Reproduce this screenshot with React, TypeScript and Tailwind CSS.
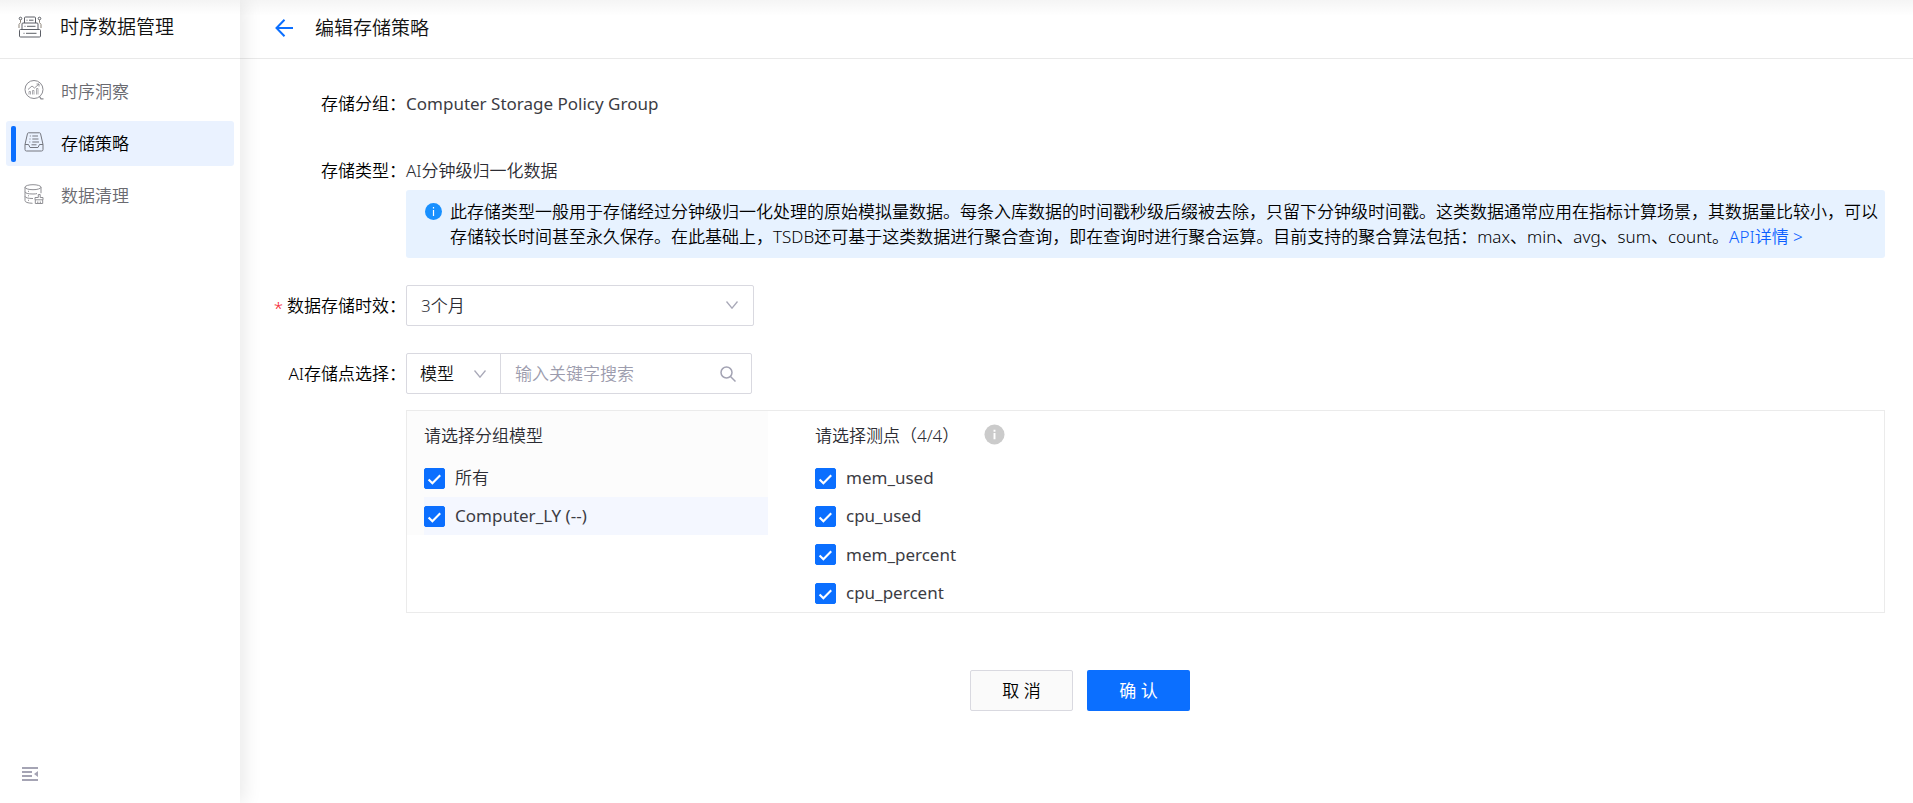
import { useState } from 'react';
import type { ReactNode } from 'react';

function BrandIcon() {
  return (
    <svg viewBox="0 0 24 22" className="h-[22px] w-6 shrink-0" fill="none" stroke="#5c5f66" strokeWidth="1">
      <path d="M6.500 7V2q0-1 1-1h9q1 0 1 1v5" />
      <path d="M4 13.500V8q0-1 1-1h14q1 0 1 1v5.500" />
      <path d="M2.500 13.500h19q1 0 1 1V20q0 1-1 1h-19q-1 0-1-1v-5.500q0-1 1-1z" />
      <path d="M8.500 4.200h1M11 4.200h4.500M6.500 10.300h1M9 10.300h8.500M5.500 17.300h1M8 17.300h10.500" />
      <circle cx="2.500" cy="2.500" r="1.300" />
      <circle cx="21.500" cy="2.500" r="1.300" />
      <path d="M2.500 4v2.500L1 8.500V12M21.500 4v2.500L23 8.500V12" stroke="#8b8378" />
    </svg>
  );
}

function InsightIcon() {
  return (
    <svg viewBox="0 0 20 20" className="size-5 shrink-0" fill="none" stroke="#8a8a90" strokeWidth="1">
      <circle cx="10" cy="9.500" r="9" />
      <path d="M15.500 16.500l1.500 2.300h2.500" strokeWidth="1.300" />
      <path d="M4 9.500l4-3.500 2.500 2L15 4M12.500 4H15v2.500" strokeWidth=".9" />
      <path d="M5 14.500v-3h1.500v3M8.500 14.500v-4H10v4M12.500 14.500v-6H14v6" strokeWidth=".7" />
    </svg>
  );
}

function PolicyIcon() {
  return (
    <svg viewBox="0 0 20 20" className="size-5 shrink-0" fill="none" stroke="#74777f" strokeWidth="1">
      <path d="M1 12.500L3.500 1.500q.2-.7 1-.7h11q.8 0 1 .7L19 12.500" />
      <path d="M1 12.500h3.500l1.500 3h8l1.500-3H19v5q0 1.500-1.500 1.500h-15Q1 19 1 17.500z" />
      <path d="M5.800 4h1M8.300 4H14M5.500 7h1M8.300 7h6.200M5.300 10h1M8.300 10H15M7.500 12.800h5" />
    </svg>
  );
}

function CleanIcon() {
  return (
    <svg viewBox="0 0 20 20" className="size-5 shrink-0" fill="none" stroke="#8f8f94" strokeWidth="1">
      <ellipse cx="9" cy="3.200" rx="8" ry="2.500" />
      <path d="M1 3.200v13.300q0 2.500 7.500 2.800M17 3.200v6" />
      <path d="M1 7.800q.5 2.200 8 2.200 2.500 0 4-.4M1 12.300q.5 2.200 8 2.200" />
      <path d="M4 7.300h1M4 11.800h1M4 16.300h1" />
      <path d="M14.300 13.500v-3h1.900v3h2.800v2.300h-8v-2.300zM11.300 15.800v3.700h7.400v-3.700M13.800 19.500v-2M16.300 19.500v-2" />
    </svg>
  );
}

function CollapseIcon() {
  return (
    <svg viewBox="0 0 16 14" className="h-[14px] w-4" fill="#a5a4b4">
      <path d="M0 0h16v2H0zM0 4h10v2H0zM0 8h10v2H0zM0 12h16v2H0zM16 4v6l-4-3z" />
    </svg>
  );
}

function ChevronDown({ className }: { className: string }) {
  return (
    <svg viewBox="0 0 12 8" className={`h-2 w-3 ${className}`} fill="none" stroke="#a9a9b8" strokeWidth="1.300">
      <path d="M.5.5L6 7.200 11.500.5" />
    </svg>
  );
}

function Checkbox({ label, className = '' }: { label: string; className?: string }) {
  const [checked, setChecked] = useState(true);
  return (
    <label className={`flex cursor-pointer items-center gap-[10px] ${className}`}>
      <span className="relative size-[21px] shrink-0">
        <input
          type="checkbox"
          checked={checked}
          onChange={(e) => setChecked(e.target.checked)}
          className="block size-[21px] appearance-none rounded-[2px] border border-[#d4d4dc] bg-white checked:border-[#0b6fff] checked:bg-[#0b6fff]"
        />
        <svg viewBox="0 0 22 22" className="pointer-events-none absolute inset-0 size-[21px]" fill="none" stroke="#fff" strokeWidth="2.200">
          <path d="M4.800 12l4 4L17 7.500" />
        </svg>
      </span>
      <span>{label}</span>
    </label>
  );
}

function NavItem({ icon, label, active = false }: { icon: ReactNode; label: string; active?: boolean }) {
  return (
    <a
      href="#"
      aria-current={active ? 'page' : undefined}
      className={`flex h-[45px] items-center rounded-[3px] pl-[5px] ${active ? 'bg-[#eaf2ff] text-black' : 'text-[#6a6a70]'}`}
    >
      <span className={`h-9 w-[5px] rounded-[2px] ${active ? 'bg-[#0b6fff]' : ''}`} />
      <span className="-mt-1 ml-2">{icon}</span>
      <span className="ml-[17px]">{label}</span>
    </a>
  );
}

function Field({ label, htmlFor, required = false, children, tall = false }: {
  label: string;
  htmlFor?: string;
  required?: boolean;
  children: ReactNode;
  tall?: boolean;
}) {
  const labelClass = `flex w-[131px] shrink-0 items-center justify-end whitespace-nowrap text-black ${tall ? 'h-[41px]' : 'h-[26px]'}`;
  const text = (
    <>
      {required && <span className="mr-1 pt-1 text-[#f5222d]">*</span>}
      {label}
    </>
  );
  return (
    <div className="flex">
      {htmlFor ? <label htmlFor={htmlFor} className={labelClass}>{text}</label> : <div className={labelClass}>{text}</div>}
      <div className="min-w-0 flex-1">{children}</div>
    </div>
  );
}

export default function App() {
  return (
    <div lang="zh-CN" className="relative flex min-h-screen bg-white font-['Noto_Sans','Noto_Sans_CJK_SC',sans-serif] text-[17px] leading-[26px] font-[350] text-[#2c2c33]">
      <div className="pointer-events-none absolute inset-x-0 top-0 h-4 bg-linear-to-b from-black/4 to-transparent" />

      <aside className="z-10 flex w-60 shrink-0 flex-col bg-white shadow-[4px_0_18px_rgba(0,0,0,0.09)]">
        <div className="flex h-[59px] items-center gap-[18px] border-b border-[#e9e9e9] bg-linear-to-b from-[#f4f4f4] to-white to-25% pb-1 pl-[18px] text-[19px] text-[#111]">
          <BrandIcon />
          <span>时序数据管理</span>
        </div>
        <nav className="flex flex-col gap-[7px] px-[6px] pt-[10px]">
          <NavItem icon={<InsightIcon />} label="时序洞察" />
          <NavItem icon={<PolicyIcon />} label="存储策略" active />
          <NavItem icon={<CleanIcon />} label="数据清理" />
        </nav>
        <button type="button" aria-label="收起菜单" className="mt-auto mb-[22px] ml-[22px] self-start">
          <CollapseIcon />
        </button>
      </aside>

      <main className="flex min-w-0 flex-1 flex-col">
        <header className="flex h-[59px] items-center gap-[22px] border-b border-[#e9e9e9] pb-[2px] pl-[35px]">
          <a href="#" aria-label="返回">
            <svg viewBox="0 0 18 18" className="size-[18px]" fill="none" stroke="#0b6fff" strokeWidth="2">
              <path d="M9.500.8L1.500 9l8 8.200M1.500 9H18" />
            </svg>
          </a>
          <h1 className="text-[19px] font-[350] text-[#111]">编辑存储策略</h1>
        </header>

        <form className="pt-8 pr-7 pl-[35px]" onSubmit={(e) => e.preventDefault()}>
          <div className="flex flex-col gap-[27px]">
            <div className="mb-[14px]">
              <Field label="存储分组："><span className="font-normal text-[#3c3c43]">Computer Storage Policy Group</span></Field>
            </div>

            <Field label="存储类型：">
              <div>AI分钟级归一化数据</div>
              <div className="mt-[6px] flex items-start gap-2 rounded-[3px] bg-[#e7f2ff] py-[9px] pr-1 pl-[19px] leading-[25px] text-black">
                <svg viewBox="0 0 17 17" className="mt-1 size-[17px] shrink-0">
                  <circle cx="8.500" cy="8.500" r="8.500" fill="#1890ff" />
                  <path d="M8.500 4v1.500M8.500 7v6" stroke="#fff" strokeWidth="1.200" />
                </svg>
                <p>
                  此存储类型一般用于存储经过分钟级归一化处理的原始模拟量数据。每条入库数据的时间戳秒级后缀被去除，只留下分钟级时间戳。这类数据通常应用在指标计算场景，其数据量比较小，可以存储较长时间甚至永久保存。在此基础上，TSDB还可基于这类数据进行聚合查询，即在查询时进行聚合运算。目前支持的聚合算法包括：max、min、avg、sum、count。
                  <a href="#" className="text-[#0b5fff]">API详情 &gt;</a>
                </p>
              </div>
            </Field>

            <Field label="数据存储时效：" htmlFor="retention" required tall>
              <div className="relative w-[348px]">
                <select id="retention" className="block h-[41px] w-full appearance-none rounded-[2px] border border-[#d9d9e0] bg-white px-[14px]">
                  <option>3个月</option>
                </select>
                <ChevronDown className="pointer-events-none absolute top-4 right-4" />
              </div>
            </Field>

            <Field label="AI存储点选择：" htmlFor="keyword" tall>
              <div className="flex h-[41px] w-[346px] rounded-[2px] border border-[#d9d9e0]">
                <div className="relative w-[94px] border-r border-[#d9d9e0]">
                  <select aria-label="搜索类型" className="h-full w-full appearance-none px-[13px] text-[#111]">
                    <option>模型</option>
                  </select>
                  <ChevronDown className="pointer-events-none absolute top-4 right-[14px]" />
                </div>
                <input
                  id="keyword"
                  type="text"
                  placeholder="输入关键字搜索"
                  className="min-w-0 flex-1 px-[14px] outline-none placeholder:text-[#9c9cad]"
                />
                <button type="button" aria-label="搜索" className="pr-[15px]">
                  <svg viewBox="0 0 16 16" className="size-4" fill="none" stroke="#a3a3b3" strokeWidth="1.500">
                    <circle cx="6.500" cy="6.500" r="5.500" />
                    <path d="M10.500 10.500l5 5" />
                  </svg>
                </button>
              </div>

              <div className="mt-4 flex border border-[#ebebeb]">
                <section className="w-[361px] shrink-0 self-start bg-[#fcfcfc] pl-[17px]">
                  <h2 className="pt-3 pb-[10px] font-[350]">请选择分组模型</h2>
                  <Checkbox label="所有" className="h-[38px]" />
                  <Checkbox label="Computer_LY (--)" className="h-[38px] bg-[#f4f7ff] font-normal text-[#3c3c43]" />
                </section>
                <section className="ml-[47px] flex-1">
                  <div className="flex items-center gap-[25px] pt-3 pb-[10px]">
                    <h2 className="font-[350]">请选择测点（4/4）</h2>
                    <svg viewBox="0 0 22 22" className="-mt-1 size-[21px]" role="img" aria-label="说明">
                      <circle cx="11" cy="11" r="10.500" fill="#cbcbcb" />
                      <path d="M11 6v2M11 9.500V16" stroke="#fff" strokeWidth="2" />
                    </svg>
                  </div>
                  <div className="font-normal text-[#3c3c43]">
                    <Checkbox label="mem_used" className="h-[38px]" />
                    <Checkbox label="cpu_used" className="h-[38px]" />
                    <Checkbox label="mem_percent" className="h-[39px]" />
                    <Checkbox label="cpu_percent" className="h-[38px]" />
                  </div>
                </section>
              </div>
            </Field>
          </div>

          <div className="mt-[57px] flex justify-center gap-[14px] pb-8">
            <button type="button" className="h-[41px] w-[103px] rounded-[2px] border border-[#d9d9e0] bg-[#fafafa] text-black">取 消</button>
            <button type="submit" className="h-[41px] w-[103px] rounded-[2px] bg-[#0b6fff] font-normal text-white">确 认</button>
          </div>
        </form>
      </main>
    </div>
  );
}
